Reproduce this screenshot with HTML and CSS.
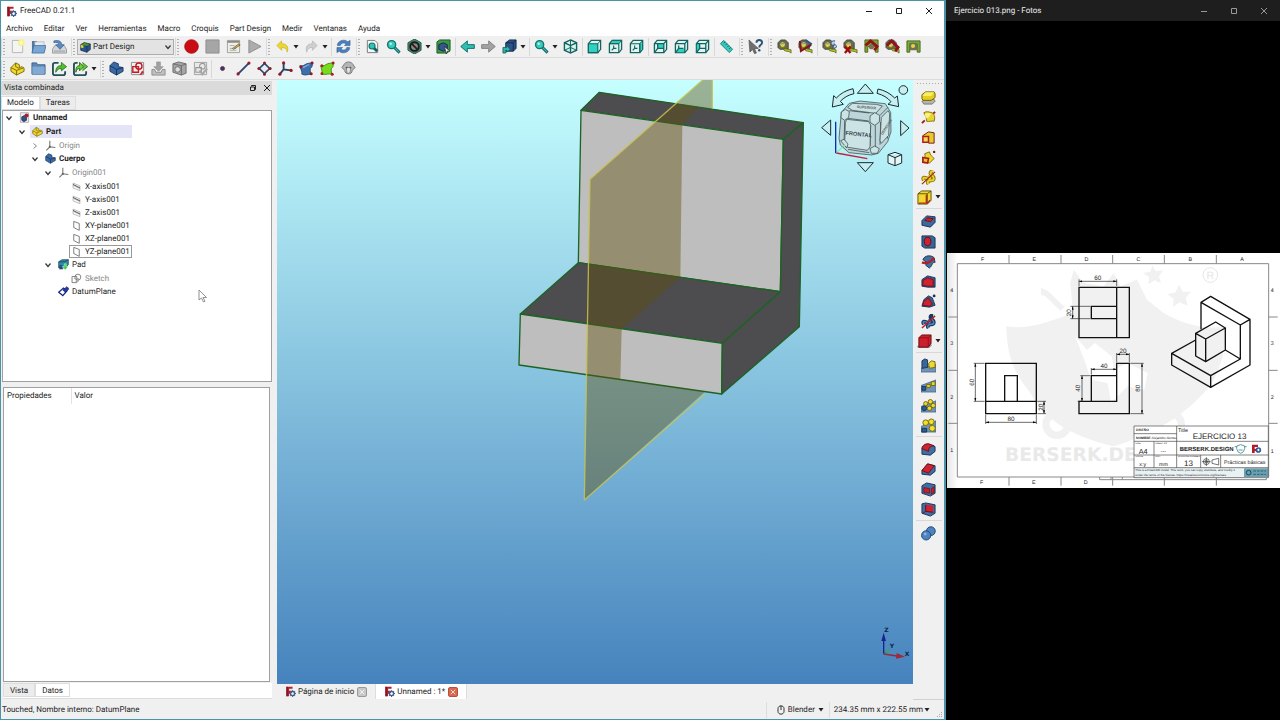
FILE: index.html
```html
<!DOCTYPE html>
<html lang="es">
<head>
<meta charset="utf-8">
<title>FreeCAD 0.21.1</title>
<link rel="stylesheet" href="styles.css">
</head>
<body>
<svg class="sprite" aria-hidden="true">
  <symbol id="logo" viewBox="0 0 16 16"><path d="M2 1h9v3H6v3h4v3H6v5H2z" fill="#b3202c"/><path d="M2 1h2v14H2z" fill="#7c1420"/><circle cx="11" cy="11" r="3" fill="none" stroke="#41618f" stroke-width="2"/><path d="M11 6v2M11 14v2M6 11h2M14 11h2M7.500 7.500l1 1M13.500 13.500l1 1M14.500 7.500l-1 1M8.500 13.500l-1 1" stroke="#41618f" stroke-width="1.600"/></symbol>
  <symbol id="new" viewBox="0 0 16 16"><path d="M2.500 1.500h11v13h-11z" fill="#f4f4f2" stroke="#b5b5b2"/><circle cx="12" cy="4" r="3.500" fill="#f7f38a"/><circle cx="12" cy="4" r="1.800" fill="#fffbb8"/></symbol>
  <symbol id="open" viewBox="0 0 16 16"><path d="M1 2h5l1 2h6v10H1z" fill="#55789f"/><path d="M4 3h10v7H4z" fill="#e8eaec" stroke="#9aa5b0" stroke-width=".6"/><path d="M3 7h13l-2 8H1z" fill="#79a6d6" stroke="#3f6996" stroke-width=".8"/></symbol>
  <symbol id="save" viewBox="0 0 16 16"><path d="M3 7h10l2.500 4v4H.5v-4z" fill="#d3d5d6" stroke="#84888c" stroke-width=".8"/><path d="M2 12h12v2H2z" fill="#b3b6b9"/><path d="M2 2c5-1 8 0 8.500 4H13l-4.500 5L4 6h3C7 4 5 3 2 4z" fill="#5a8bc0" stroke="#36608e" stroke-width=".7"/></symbol>
  <symbol id="rec" viewBox="0 0 16 16"><circle cx="8" cy="8" r="7.300" fill="#cb0c12" stroke="#a20a10" stroke-width=".8"/></symbol>
  <symbol id="stop" viewBox="0 0 16 16"><path d="M1 1h14v14H1z" fill="#a6a6a6" stroke="#8e8e8e"/></symbol>
  <symbol id="macro" viewBox="0 0 16 16"><path d="M1.500 1.500h13v13h-13z" fill="#eeeeea" stroke="#a0a09a"/><path d="M1.500 2h13v2h-13z" fill="#8b8b84"/><path d="M4 7h5M4 10h7M4 12h7" stroke="#aaa" /><path d="M7 10l7-5 1 1.500-7 4.500z" fill="#dfb94a" stroke="#60532f" stroke-width=".8"/></symbol>
  <symbol id="play" viewBox="0 0 16 16"><path d="M2 1l13 7-13 7z" fill="#acacac" stroke="#8f8f8f"/></symbol>
  <symbol id="undo" viewBox="0 0 16 16"><path d="M2 7l5-5v3c5 0 8 3 6 9 0-3-2-5-6-5v3z" fill="#edd633" stroke="#cbb320" stroke-width=".8"/></symbol>
  <symbol id="redo" viewBox="0 0 16 16"><path d="M14 7L9 2v3c-5 0-8 3-6 9 0-3 2-5 6-5v3z" fill="#cfcfcf" stroke="#b6b6b6" stroke-width=".8"/></symbol>
  <symbol id="refresh" viewBox="0 0 16 16"><path d="M1.500 7V5.500C3 1 10 0 12.500 3L15 1.500V7H9l1.700-1.700C8.500 3.500 5.500 4 4.500 7zM14.500 9v1.500C13 15 6 16 3.500 13L1 14.500V9h6l-1.700 1.700c2.200 1.800 5.200 1.300 6.200-1.700z" fill="#4b80bd" stroke="#315f95" stroke-width=".6"/></symbol>
  <symbol id="fitall" viewBox="0 0 16 16"><path d="M2.500 1.500h8l3 3v10h-11z" fill="#f6f6f6" stroke="#777"/><path d="M9 9l4 4" stroke="#0f6260" stroke-width="3"/><circle cx="7.500" cy="7.500" r="3.200" fill="#34c4b6" stroke="#0f7672" stroke-width="1.200"/></symbol>
  <symbol id="lens" viewBox="0 0 16 16"><path d="M8.500 8.500l6 6" stroke="#0f6260" stroke-width="3.200"/><path d="M9 9l5 5" stroke="#39bdb0" stroke-width="1.200"/><circle cx="6" cy="6" r="4.300" fill="#3bcbbd" stroke="#0f7672" stroke-width="1.500"/><circle cx="5" cy="5" r="1.300" fill="#b5f5ee"/></symbol>
  <symbol id="style" viewBox="0 0 16 16"><path d="M8 0l7 4v8l-7 4-7-4V4z" fill="#3f8a71" stroke="#1e5a48"/><circle cx="8" cy="8" r="4.600" fill="#7b9289" stroke="#241518" stroke-width="2"/><path d="M5 5l6 6" stroke="#40151a" stroke-width="2"/></symbol>
  <symbol id="bbox" viewBox="0 0 16 16"><path d="M1 3l3-2h11v11l-3 3H1z" fill="#3a9b45" stroke="#1c5524"/><path d="M3 6l5-2 4 2v5l-4 2-5-2z" fill="#35578c" stroke="#132a4a"/><path d="M9 8l6 5-3 0-1 3z" fill="#eee" stroke="#222" stroke-width=".7"/></symbol>
  <symbol id="left" viewBox="0 0 16 16"><path d="M.8 8l7-6v4h7.500v4H7.800v4z" fill="#2cc0b1" stroke="#116b66"/></symbol>
  <symbol id="right" viewBox="0 0 16 16"><path d="M15.200 8l-7-6v4H.7v4h7.500v4z" fill="#a3a3a3" stroke="#808080"/></symbol>
  <symbol id="linked" viewBox="0 0 16 16"><path d="M4 4l4-3h7v9l-3 3H4z" fill="#2d5288" stroke="#12294a"/><path d="M4 4h8v9M12 4l3-3" fill="none" stroke="#12294a"/><path d="M1 15V9h4V7l4 4-4 3v-2H4v3z" fill="#2fb5ab" stroke="#0e5c57" stroke-width=".8"/></symbol>
  <symbol id="wb" viewBox="0 0 16 16"><path d="M1 4l5-3 9 2v8l-5 4-9-3z" fill="#2d5288" stroke="#12294a"/><path d="M1 4l5-3 9 2-5 3z" fill="#4f9a35" stroke="#12294a" stroke-width=".6"/><path d="M1 4l4 1v4L1 8z" fill="#e3cf38"/><path d="M10 6v9" stroke="#12294a"/></symbol>
  <symbol id="iso" viewBox="0 0 16 16"><path d="M8 1l6.500 3v8L8 15l-6.500-3V4zM1.500 4L8 7l6.500-3M8 7v8" fill="#d7f5f0" stroke="#14655f" stroke-width="1.500"/><path d="M8 1v6M1.500 12L8 9l6.500 3" fill="none" stroke="#14655f"/></symbol>
  <symbol id="vfront" viewBox="0 0 16 16"><path d="M1.500 5l3-3.500h10v9.500l-3 3.500h-10z" fill="#d9f6f2" stroke="#14655f" stroke-width="1.400"/><path d="M1.500 5h10v9.500h-10z" fill="#2fd2c2" stroke="#14655f" stroke-width="1.200"/><path d="M11.500 5l3-3.500" stroke="#14655f"/></symbol>
  <symbol id="vtop" viewBox="0 0 16 16"><path d="M1.500 5l3-3.500h10v9.500l-3 3.500h-10z" fill="#e2f4f1" stroke="#14655f" stroke-width="1.400"/><path d="M1.500 5l3-3.500h10L11.500 5z" fill="#2fd2c2" stroke="#14655f"/><path d="M1.500 5h10v9.500M6 7v3h3M6 10l-2 2" fill="none" stroke="#14655f" stroke-width="1.200"/></symbol>
  <symbol id="vright" viewBox="0 0 16 16"><path d="M1.500 5l3-3.500h10v9.500l-3 3.500h-10z" fill="#e2f4f1" stroke="#14655f" stroke-width="1.400"/><path d="M11.500 5l3-3.500v9.500l-3 3.500z" fill="#2fd2c2" stroke="#14655f"/><path d="M1.500 5h10v9.500M6 7v3h3M6 10l-2 2" fill="none" stroke="#14655f" stroke-width="1.200"/></symbol>
  <symbol id="vrear" viewBox="0 0 16 16"><path d="M1.500 5l3-3.500h10v9.500l-3 3.500h-10z" fill="#e2f4f1" stroke="#14655f" stroke-width="1.400"/><path d="M5 5h6v5H5z" fill="#2fd2c2"/><path d="M1.500 5h10v9.500M11.500 5l3-3.500M5 5v5h6M5 10l-3 4" fill="none" stroke="#14655f" stroke-width="1.400"/></symbol>
  <symbol id="vbottom" viewBox="0 0 16 16"><path d="M1.500 5l3-3.500h10v9.500l-3 3.500h-10z" fill="#e2f4f1" stroke="#14655f" stroke-width="1.400"/><path d="M2 14l3-4h6v4z" fill="#2fd2c2"/><path d="M1.500 5h10v9.500M11.500 5l3-3.500M5 7v3h5M5 10l-3 4" fill="none" stroke="#14655f" stroke-width="1.400"/></symbol>
  <symbol id="vleft" viewBox="0 0 16 16"><path d="M1.500 5l3-3.500h10v9.500l-3 3.500h-10z" fill="#e2f4f1" stroke="#14655f" stroke-width="1.400"/><path d="M2 5h3v5l-3 4z" fill="#2fd2c2"/><path d="M1.500 5h10v9.500M11.500 5l3-3.500M5 5v5h6M5 10l-3 4" fill="none" stroke="#14655f" stroke-width="1.400"/></symbol>
  <symbol id="ruler" viewBox="0 0 16 16"><path d="M5 1.500L14.500 11 11 14.500 1.500 5z" fill="#3acabc" stroke="#14837b"/><path d="M6.500 3L5 4.500M8.500 5L7 6.500M10.500 7L9 8.500M12.500 9L11 10.500" stroke="#0d5b56"/></symbol>
  <symbol id="what" viewBox="0 0 16 16"><path d="M1 1l10 9-4 .3 2 4.500-2 .9-2.200-4.500L2 14z" fill="#6e6e6e" stroke="#444" stroke-width=".6"/><path d="M9 4c0-4 6-4 6 0 0 2.500-3 2-3 5" fill="none" stroke="#2e5175" stroke-width="2"/><circle cx="12" cy="12" r="1.300" fill="#2e5175"/></symbol>
  <symbol id="tape" viewBox="0 0 16 16"><path d="M1 4l3-3h5l3 3v7H3L1 9z" fill="#6b6a54" stroke="#35352a" stroke-width=".8"/><circle cx="6" cy="6" r="3" fill="#e5d63a" stroke="#4c491b" stroke-width=".7"/><path d="M4 5h4" stroke="#6fa6d2" stroke-width="1.500"/><path d="M7 10l8 1.500v3.500l-2-1.500-5-1z" fill="#b5c72a" stroke="#596313" stroke-width=".8"/></symbol>
  <symbol id="m-ang" viewBox="0 0 16 16"><use href="#tape"/><path d="M8 1l6 4-3 5" fill="none" stroke="#34578a" stroke-width="2"/><path d="M14 6L3 13 2 2" fill="none" stroke="#8a1218" stroke-width="2"/></symbol>
  <symbol id="m-ref" viewBox="0 0 16 16"><use href="#tape"/><path d="M14 2c-5-1-6 5-1 5V5l3 3-3 2.500V9" fill="#bcd0ea" stroke="#2e5288" stroke-width="1"/></symbol>
  <symbol id="m-clear" viewBox="0 0 16 16"><use href="#tape"/><path d="M2 8l6 7M8 8l-6 7" stroke="#a4080e" stroke-width="2.400"/></symbol>
  <symbol id="m-all" viewBox="0 0 16 16"><path d="M1 1h14v13h-3V8H4v6H1z" fill="#86a334" stroke="#4d6118"/><circle cx="8" cy="8" r="3" fill="#75744f"/><path d="M1.500 7L7 2l7 6-3 4" fill="none" stroke="#931219" stroke-width="3"/></symbol>
  <symbol id="m-3d" viewBox="0 0 16 16"><use href="#tape"/><path d="M2 7l5-5 7 7-3 4" fill="none" stroke="#931219" stroke-width="3"/></symbol>
  <symbol id="m-delta" viewBox="0 0 16 16"><path d="M1 14V2h14v12h-3V5H4v9z" fill="#7ba83a" stroke="#456618"/><path d="M4 6l2-2h4l2 2v6H4z" fill="#707056"/><circle cx="7.500" cy="7.500" r="2.200" fill="#e1d544"/></symbol>
  <symbol id="part" viewBox="0 0 16 16"><path d="M1 7l5-5 4 2v3l3-1 2 2v3l-8 4-6-4z" fill="#f0d928" stroke="#6b5c0b" stroke-width=".9"/><path d="M1 7l6 3 0 5M7 10l8-3M6 2v4l4 2" fill="none" stroke="#7d6b0e"/></symbol>
  <symbol id="folder" viewBox="0 0 16 16"><path d="M1 2h5l1 2h8v10H1z" fill="#5e88b7" stroke="#3d6289"/><path d="M1.500 6h13v8h-13z" fill="#80a9d3"/></symbol>
  <symbol id="link" viewBox="0 0 16 16"><path d="M7 2H3a2 2 0 00-2 2v9a2 2 0 002 2h9a2 2 0 002-2v-2" fill="none" stroke="#24515a" stroke-width="2"/><path d="M4 12c0-5 2-7 6-7V1.500L15.500 6 10 10.500V8c-3 0-4 1-6 4z" fill="#4fc02e" stroke="#1f6419" stroke-width=".8"/></symbol>
  <symbol id="links" viewBox="0 0 16 16"><path d="M5 2H3a2 2 0 00-2 2v9a2 2 0 002 2h9a2 2 0 002-2v-2" fill="none" stroke="#24515a" stroke-width="2"/><path d="M3 12c0-5 1-7 4-7V1.500L11.500 6 7 10.500V8c-2 0-3 1-4 4zM10 1.500L15.500 6 10 10.500" fill="#6ccb3c" stroke="#1f6419" stroke-width=".9"/></symbol>
  <symbol id="body" viewBox="0 0 16 16"><path d="M1 5l4-4 5 2v3l5 1v4l-7 4-7-4z" fill="#3a69a3" stroke="#14335b" stroke-width=".9"/><path d="M1 5l7 4v6M8 9l7-2" fill="none" stroke="#14335b"/></symbol>
  <symbol id="sketch" viewBox="0 0 16 16"><path d="M1.500 1.500h13v13h-13z" fill="#f7efef" stroke="#8b8b8b"/><path d="M3 6h6v6H3z" fill="none" stroke="#c31a24" stroke-width="1.500"/><circle cx="9.500" cy="5.500" r="3.300" fill="none" stroke="#c31a24" stroke-width="1.500"/><path d="M13 10l2 2-3 3-2 0z" fill="#c7323a"/></symbol>
  <symbol id="g-import" viewBox="0 0 16 16"><path d="M1 9h3l1 3h6l1-3h3v6H1z" fill="#c1c1c1" stroke="#8c8c8c"/><path d="M6 1h4v5h3l-5 5-5-5h3z" fill="#a2a2a2" stroke="#888" stroke-width=".6"/></symbol>
  <symbol id="g-shape" viewBox="0 0 16 16"><path d="M1 3l6-2 8 2v10l-5 2-9-3z" fill="#a6a6a6" stroke="#6c6c6c"/><path d="M10 5v10M1 3l9 2 5-2" fill="none" stroke="#6c6c6c"/><circle cx="6" cy="9" r="3" fill="#ddd" stroke="#6c6c6c"/></symbol>
  <symbol id="g-valid" viewBox="0 0 16 16"><path d="M1.500 1.500h13v13h-13z" fill="#e9e9e9" stroke="#a2a2a2"/><path d="M3 7h6v5H3z" fill="none" stroke="#999" stroke-width="1.200"/><circle cx="10" cy="5.500" r="3" fill="none" stroke="#999" stroke-width="1.200"/><path d="M7 10l3 4 5-6" fill="none" stroke="#aaa" stroke-width="2.400"/></symbol>
  <symbol id="point" viewBox="0 0 16 16"><circle cx="8" cy="8" r="2.200" fill="#2b3d6e" stroke="#7a2440" stroke-width=".8"/></symbol>
  <symbol id="line" viewBox="0 0 16 16"><path d="M2 14L14 2" stroke="#2a4a72" stroke-width="2"/><g fill="#941c27"><circle cx="2.200" cy="13.800" r="1.700"/><circle cx="13.800" cy="2.200" r="1.700"/></g></symbol>
  <symbol id="plane" viewBox="0 0 16 16"><path d="M8 2.500L13.500 8 8 13.500 2.500 8z" fill="#e8edf2" stroke="#2d4a69" stroke-width="1.800"/><g fill="#8c1c26"><circle cx="8" cy="2" r="1.600"/><circle cx="14" cy="8" r="1.600"/><circle cx="8" cy="14" r="1.600"/><circle cx="2" cy="8" r="1.600"/></g></symbol>
  <symbol id="lcs" viewBox="0 0 16 16"><path d="M6 2v7l8 1M6 9l-4 5" fill="none" stroke="#2d4260" stroke-width="2"/><g fill="#8c1c26"><circle cx="6" cy="2" r="1.700"/><circle cx="14" cy="10" r="1.700"/><circle cx="2" cy="14" r="1.700"/></g></symbol>
  <symbol id="binder" viewBox="0 0 16 16"><path d="M1 5c3 1 5-1 7-2s4 0 6-2c0 3 1 5-2 7 0 3 0 5 1 6-4 0-6 2-10 0 1-3-2-6-2-9z" fill="#3e6fab" stroke="#2a4f7f"/><path d="M4 7c2 0 4-3 7-3" fill="none" stroke="#7ea6d6" stroke-width="1.500"/><g fill="#8e1824"><circle cx="2" cy="6" r="1.600"/><circle cx="14" cy="2" r="1.600"/><circle cx="13" cy="13.500" r="1.600"/></g></symbol>
  <symbol id="subbinder" viewBox="0 0 16 16"><path d="M1 5c3 1 5-1 7-2s4 0 6-2c0 3 1 5-2 7 0 3 0 5 1 6-4-1-6 1-11 0 1-3-1-6-1-9z" fill="#77dc1c" stroke="#3f8d12"/><g fill="#a3201c"><circle cx="2" cy="5" r="1.600"/><circle cx="14" cy="2" r="1.600"/><circle cx="13" cy="14" r="1.600"/><circle cx="2" cy="13.500" r="1.500"/></g></symbol>
  <symbol id="clone" viewBox="0 0 16 16"><path d="M3 4c2-4 8-4 10 0l2 3-3 3c0 5-8 5-8 0L1 7z" fill="#b5b5b5" stroke="#7a7a7a"/><path d="M5.500 7h5l-1 6h-3z" fill="#e6e6e6" stroke="#777" stroke-width=".8"/><circle cx="6" cy="7" r=".9" fill="#555"/><circle cx="10" cy="7" r=".9" fill="#555"/></symbol>
  <symbol id="pad" viewBox="0 0 16 16"><path d="M1 12l4-2h9l1 2-3 3H3z" fill="#b4b4ae" stroke="#77776c"/><path d="M1 5l4-3h9l1 2v4l-4 3H2L1 9z" fill="#e6cf1c" stroke="#6a5e0c"/><path d="M1.500 5.500L5 2.500h9l-3 4H3z" fill="#f7ee62"/></symbol>
  <symbol id="revol" viewBox="0 0 16 16"><path d="M1 14l3-3M12 5l3-3" stroke="#a41b1b" stroke-width="2"/><path d="M3 3c3-2 5-1 9 0 3 2 3 6 2 9-3-1-5 1-8 0 0-3-1-6-3-9z" fill="#e8d52c" stroke="#807213"/><path d="M4 4c3-1 5-1 7 0l-3 4-3 1z" fill="#f8f183"/></symbol>
  <symbol id="loft" viewBox="0 0 16 16"><path d="M2 6l6-4 6 1v11l-6 0z" fill="#e4cb2e" stroke="#7c1416"/><path d="M2 7h6v6H2z" fill="#f1dd47" stroke="#b01b1e" stroke-width="1.600"/></symbol>
  <symbol id="pipe" viewBox="0 0 16 16"><path d="M4 4l5-2c1 4 3 5 5 7l-5 5-7-4c2-1 3-3 2-6z" fill="#efd82b" stroke="#7a6a0d"/><path d="M2 8l6 1-1 5-5-1z" fill="#e9c825" stroke="#a91b1b" stroke-width="1.800"/><circle cx="14" cy="2" r="1.300" fill="#7c1414"/></symbol>
  <symbol id="helix" viewBox="0 0 16 16"><path d="M3 11c-2-4 1-3 4-2s4-1 1-3M8 15c-2-3 0-4 3-4s4-3 0-6c-2-2 0-4 2-4" fill="none" stroke="#8a7910" stroke-width="4"/><path d="M3 11c-2-4 1-3 4-2s4-1 1-3M8 15c-2-3 0-4 3-4s4-3 0-6c-2-2 0-4 2-4" fill="none" stroke="#ebd22d" stroke-width="2"/><path d="M1 15L15 2" stroke="#a31a1a" stroke-width="1.200"/></symbol>
  <symbol id="addcube" viewBox="0 0 16 16"><path d="M1 4l4-3h10v10l-4 4H1z" fill="#efd92f" stroke="#5f520a"/><path d="M1 4h10v11M11 4l4-3" fill="none" stroke="#5f520a"/><path d="M2 14h9l3-3M10 5v9" fill="none" stroke="#b52a18" stroke-width="1.500"/></symbol>
  <symbol id="pocket" viewBox="0 0 16 16"><path d="M1 7l5-5 9 1v6l-5 5-9-2z" fill="#3d6898" stroke="#17355b"/><path d="M4 7l3-3 6 1-3 3z" fill="#cf2231" stroke="#6a0e16"/></symbol>
  <symbol id="hole" viewBox="0 0 16 16"><path d="M1 2l11 0 3 2v11H4l-3-2z" fill="#386496" stroke="#17355b"/><ellipse cx="7" cy="8" rx="3.500" ry="4.500" fill="#cf2231" stroke="#5f0e18"/></symbol>
  <symbol id="groove" viewBox="0 0 16 16"><path d="M2 6c2-5 9-5 12-2l1 5c-3-1-3 4-6 6l-4-3 1-3z" fill="#436f9f" stroke="#17355b"/><path d="M1 9c5 2 9 0 13-5" fill="none" stroke="#b51f2c" stroke-width="2.500"/></symbol>
  <symbol id="subloft" viewBox="0 0 16 16"><path d="M1 6l6-4 8 2v10H7l-6-1z" fill="#35608f" stroke="#17355b"/><path d="M2 7l5-3 6 2v7H7l-5-1z" fill="#cf2231" stroke="#7a0e18"/></symbol>
  <symbol id="subpipe" viewBox="0 0 16 16"><path d="M3 6l5-4 4 2 3 8-6 2-8-1z" fill="#35608f" stroke="#17355b"/><path d="M3 8l5-4c1 3 3 4 4 7l-3 2-7-1z" fill="#cf2231" stroke="#7a0e18"/><circle cx="14" cy="2" r="1.500" fill="#17355b"/></symbol>
  <symbol id="subhelix" viewBox="0 0 16 16"><path d="M3 11c-2-4 1-3 4-2s4-1 1-3M8 15c-2-3 0-4 3-4s4-3 0-6c-2-2 0-4 2-4" fill="none" stroke="#183a63" stroke-width="4"/><path d="M3 11c-2-4 1-3 4-2s4-1 1-3M8 15c-2-3 0-4 3-4s4-3 0-6" fill="none" stroke="#5b87b8" stroke-width="1.500"/><path d="M1 15L15 2" stroke="#b51f2c" stroke-width="1.500"/></symbol>
  <symbol id="subcube" viewBox="0 0 16 16"><path d="M0 13l4-2h11l1 1-3 3H1z" fill="#8d99a6"/><path d="M2 4l3-3h10v9l-3 4H2z" fill="#cc1f2b" stroke="#6c0d14"/><path d="M2 4h10v10M12 4l3-3" fill="none" stroke="#8d1119"/></symbol>
  <symbol id="mirror" viewBox="0 0 16 16"><path d="M0 11l16-4v8H0z" fill="#6f93ba" stroke="#36587f" stroke-width=".7"/><path d="M1 3l3-2 3 1v8l-6 1z" fill="#3a6798" stroke="#17355b"/><path d="M8 6l3-3 4 1v6l-6 1z" fill="#eed931" stroke="#75670d"/></symbol>
  <symbol id="lpat" viewBox="0 0 16 16"><path d="M0 8l16-6v13H0z" fill="#6f93ba" stroke="#36587f" stroke-width=".7"/><path d="M1 9h4v4H1z" fill="#2e5c8c" stroke="#17355b"/><path d="M6 7h4v3H6zM11 4h4v4h-4z" fill="#eed931" stroke="#75670d"/></symbol>
  <symbol id="ppat" viewBox="0 0 16 16"><path d="M0 9l16-6v12H0z" fill="#6f93ba" stroke="#36587f" stroke-width=".7"/><circle cx="3.500" cy="11" r="2.500" fill="#2e5c8c" stroke="#17355b"/><g fill="#eed931" stroke="#75670d"><circle cx="5" cy="6" r="2.200"/><circle cx="10" cy="4" r="2.400"/><circle cx="13" cy="8" r="2.400"/><circle cx="9" cy="11" r="2.400"/></g></symbol>
  <symbol id="multi" viewBox="0 0 16 16"><path d="M0 9l16-6v12H0z" fill="#6f93ba" stroke="#36587f" stroke-width=".7"/><path d="M1 11h5v4H1z" fill="#2e5c8c" stroke="#17355b"/><g fill="#f3e02c" stroke="#75670d"><circle cx="5" cy="5" r="3"/><circle cx="11" cy="4" r="3"/><circle cx="12" cy="11" r="3.200"/></g></symbol>
  <symbol id="fillet" viewBox="0 0 16 16"><path d="M1 7c1-4 4-5 7-5l7 3v5l-5 4-9-1z" fill="#3f6ea2" stroke="#17355b"/><path d="M1 7c1-4 4-5 7-5l6 2c-4 0-6 2-6 6z" fill="#d0222f" stroke="#7a0e18"/></symbol>
  <symbol id="chamfer" viewBox="0 0 16 16"><path d="M1 9l6-7 8 2v6l-5 4-9-1z" fill="#3f6ea2" stroke="#17355b"/><path d="M1 9l6-7 7 2-6 8z" fill="#d0222f" stroke="#7a0e18"/></symbol>
  <symbol id="draft" viewBox="0 0 16 16"><path d="M1 4l5-3 9 2v9l-5 3-9-3z" fill="#3f6ea2" stroke="#17355b"/><path d="M3 6l6 1v5l-6-1zM11 7l3-2v6l-3 2z" fill="#c9202c" stroke="#6b0d14" stroke-width=".7"/></symbol>
  <symbol id="thick" viewBox="0 0 16 16"><path d="M1 2l4-1 10 2v9l-5 3-9-3z" fill="#3f6ea2" stroke="#17355b"/><path d="M5 3l8 1v7l-8-1z" fill="#d0222f"/><path d="M5 3v7l-3 2M5 10l8 1" fill="none" stroke="#6b0d14"/></symbol>
  <symbol id="bool" viewBox="0 0 16 16"><g fill="#4d83bf" stroke="#1f4778" stroke-width="1"><circle cx="10.500" cy="5.500" r="4.700"/><circle cx="5.500" cy="10" r="4.900"/></g><circle cx="4.500" cy="8.500" r="1.500" fill="#8ab4e0"/></symbol>
  <symbol id="doc" viewBox="0 0 16 16"><path d="M2 1h12v14H2z" fill="#f0f0f5" stroke="#999"/><path d="M4 7l4-2 3 2v5l-4 2-3-2z" fill="#2f5288" stroke="#172a4b"/><circle cx="11" cy="5" r="3" fill="#b01e28"/></symbol>
  <symbol id="axes" viewBox="0 0 16 16"><path d="M7 1v9l8 1M7 10l-5 5" fill="none" stroke="#777" stroke-width="1.600"/><circle cx="7" cy="10" r="1.600" fill="#666"/></symbol>
  <symbol id="taxis" viewBox="0 0 16 16"><path d="M3 3l10 4v7L3 10zM3 6l10 5" fill="#fbfbfb" stroke="#a2a2a2"/><path d="M3 5l10 5" stroke="#555" stroke-width="1.400"/></symbol>
  <symbol id="tplane" viewBox="0 0 16 16"><path d="M4 2l8 3v10l-8-4z" fill="#fff" stroke="#666" stroke-width="1.200"/></symbol>
  <symbol id="tpad" viewBox="0 0 16 16"><path d="M1 4l5-3h9v7l-4 5H1z" fill="#2d8ca0" stroke="#173a5b"/><path d="M1 4h9l5-3" fill="none" stroke="#173a5b"/><path d="M2 9h5v6H2z" fill="#274b80"/><path d="M9 7h3v4h3l-4.500 5L6 11h3z" fill="#3bd34d" stroke="#fff" stroke-width=".6"/></symbol>
  <symbol id="tsketch" viewBox="0 0 16 16"><path d="M1.500 5h7v9h-7z" fill="#fff" stroke="#777" stroke-width="1.300"/><circle cx="10" cy="6" r="4.300" fill="none" stroke="#777" stroke-width="1.300"/><path d="M4 8h7v4H6" fill="none" stroke="#999"/></symbol>
  <symbol id="tdatum" viewBox="0 0 16 16"><path d="M1 9l7-6 5 4-6 7z" fill="#fff" stroke="#1a2b8e" stroke-width="2"/><path d="M7 6l6-5 3 3-5 5z" fill="#243aa8" stroke="#141f66"/></symbol>
  <symbol id="chev" viewBox="0 0 8 8"><path d="M1.500 2.500L4 5.500l2.500-3" fill="none" stroke="#333" stroke-width="1.200"/></symbol>
  <symbol id="chevr" viewBox="0 0 8 8"><path d="M2.500 1.500L5.500 4l-3 2.500" fill="none" stroke="#888"/></symbol>
  <symbol id="drop" viewBox="0 0 6 4"><path d="M.5 0h5L3 3.500z" fill="#222"/></symbol>
  <symbol id="min" viewBox="0 0 8 8"><path d="M1 4.500h6" stroke="currentColor"/></symbol>
  <symbol id="max" viewBox="0 0 8 8"><path d="M1.500 1.500h5v5h-5z" fill="none" stroke="currentColor"/></symbol>
  <symbol id="close" viewBox="0 0 8 8"><path d="M1 1l6 6M7 1L1 7" stroke="currentColor"/></symbol>
  <symbol id="float" viewBox="0 0 8 8"><path d="M2.500 2.500v-1h4v4h-1M1.500 3h4v3.500h-4z" fill="none" stroke="#222"/></symbol>
</svg>

<main class="desktop">
  <section class="app" aria-label="FreeCAD">
    <header class="titlebar">
      <svg class="icon12"><use href="#logo"/></svg>
      <h1 class="title">FreeCAD 0.21.1</h1>
      <button class="winbtn" aria-label="Minimizar"><svg><use href="#min"/></svg></button>
      <button class="winbtn" aria-label="Maximizar"><svg><use href="#max"/></svg></button>
      <button class="winbtn" aria-label="Cerrar"><svg><use href="#close"/></svg></button>
    </header>
    <nav class="menubar">
      <button>Archivo</button><button>Editar</button><button>Ver</button><button>Herramientas</button><button>Macro</button><button>Croquis</button><button>Part Design</button><button>Medir</button><button>Ventanas</button><button>Ayuda</button>
    </nav>
    <div class="toolbar" role="toolbar" aria-label="Principal">
      <span class="grip grip-first"></span>
      <button class="tool" aria-label="Nuevo"><svg><use href="#new"/></svg></button>
      <button class="tool" aria-label="Abrir"><svg><use href="#open"/></svg></button>
      <button class="tool" aria-label="Guardar"><svg><use href="#save"/></svg></button>
      <span class="grip"></span>
      <label class="workbench"><svg class="wb-icon"><use href="#wb"/></svg>
        <select aria-label="Banco de trabajo"><option>Part Design</option></select>
        <svg class="wb-arrow"><use href="#chev"/></svg></label>
      <span class="grip"></span>
      <button class="tool" aria-label="Grabar macro"><svg><use href="#rec"/></svg></button>
      <button class="tool" aria-label="Detener macro"><svg><use href="#stop"/></svg></button>
      <button class="tool" aria-label="Macros"><svg><use href="#macro"/></svg></button>
      <button class="tool" aria-label="Ejecutar macro"><svg><use href="#play"/></svg></button>
      <span class="grip"></span>
      <button class="tool" aria-label="Deshacer"><svg><use href="#undo"/></svg></button>
      <button class="more" aria-label="Lista deshacer"><svg><use href="#drop"/></svg></button>
      <button class="tool" aria-label="Rehacer"><svg><use href="#redo"/></svg></button>
      <button class="more" aria-label="Lista rehacer"><svg><use href="#drop"/></svg></button>
      <span class="sep"></span>
      <button class="tool" aria-label="Actualizar"><svg><use href="#refresh"/></svg></button>
      <span class="grip grip-wide"></span>
      <button class="tool" aria-label="Ajustar todo"><svg><use href="#fitall"/></svg></button>
      <button class="tool" aria-label="Ajustar selección"><svg><use href="#lens"/></svg></button>
      <button class="tool" aria-label="Estilo de dibujo"><svg><use href="#style"/></svg></button>
      <button class="more" aria-label="Estilos"><svg><use href="#drop"/></svg></button>
      <button class="tool" aria-label="Caja delimitadora"><svg><use href="#bbox"/></svg></button>
      <span class="sep"></span>
      <button class="tool" aria-label="Atrás"><svg><use href="#left"/></svg></button>
      <button class="tool" aria-label="Adelante"><svg><use href="#right"/></svg></button>
      <button class="tool" aria-label="Ir al objeto vinculado"><svg><use href="#linked"/></svg></button>
      <button class="more" aria-label="Vínculos"><svg><use href="#drop"/></svg></button>
      <span class="sep"></span>
      <button class="tool" aria-label="Zoom"><svg><use href="#lens"/></svg></button>
      <button class="more" aria-label="Opciones de zoom"><svg><use href="#drop"/></svg></button>
      <button class="tool" aria-label="Isométrica"><svg><use href="#iso"/></svg></button>
      <span class="sep"></span>
      <button class="tool" aria-label="Frontal"><svg><use href="#vfront"/></svg></button>
      <button class="tool" aria-label="Superior"><svg><use href="#vtop"/></svg></button>
      <button class="tool" aria-label="Derecha"><svg><use href="#vright"/></svg></button>
      <span class="sep"></span>
      <button class="tool" aria-label="Posterior"><svg><use href="#vrear"/></svg></button>
      <button class="tool" aria-label="Inferior"><svg><use href="#vbottom"/></svg></button>
      <button class="tool" aria-label="Izquierda"><svg><use href="#vleft"/></svg></button>
      <span class="sep"></span>
      <button class="tool" aria-label="Medir distancia"><svg><use href="#ruler"/></svg></button>
      <span class="grip grip-wide"></span>
      <button class="tool" aria-label="¿Qué es esto?"><svg><use href="#what"/></svg></button>
      <span class="grip grip-wide"></span>
      <button class="tool" aria-label="Medir lineal"><svg><use href="#tape"/></svg></button>
      <button class="tool" aria-label="Medir angular"><svg><use href="#m-ang"/></svg></button>
      <span class="sep"></span>
      <button class="tool" aria-label="Actualizar medidas"><svg><use href="#m-ref"/></svg></button>
      <button class="tool" aria-label="Borrar medidas"><svg><use href="#m-clear"/></svg></button>
      <button class="tool" aria-label="Alternar medidas"><svg><use href="#m-all"/></svg></button>
      <button class="tool" aria-label="Alternar 3D"><svg><use href="#m-3d"/></svg></button>
      <button class="tool" aria-label="Alternar delta"><svg><use href="#m-delta"/></svg></button>
    </div>
    <div class="toolbar toolbar-model" role="toolbar" aria-label="Modelado">
      <span class="grip grip-first"></span>
      <button class="tool" aria-label="Crear pieza"><svg><use href="#part"/></svg></button>
      <button class="tool" aria-label="Crear grupo"><svg><use href="#folder"/></svg></button>
      <button class="tool" aria-label="Crear vínculo"><svg><use href="#link"/></svg></button>
      <button class="tool" aria-label="Crear vínculos"><svg><use href="#links"/></svg></button>
      <button class="more" aria-label="Opciones de vínculo"><svg><use href="#drop"/></svg></button>
      <span class="grip"></span>
      <button class="tool" aria-label="Crear cuerpo"><svg><use href="#body"/></svg></button>
      <button class="tool" aria-label="Crear croquis"><svg><use href="#sketch"/></svg></button>
      <button class="tool" aria-label="Editar croquis"><svg><use href="#g-import"/></svg></button>
      <button class="tool" aria-label="Asignar croquis"><svg><use href="#g-shape"/></svg></button>
      <button class="tool" aria-label="Validar croquis"><svg><use href="#g-valid"/></svg></button>
      <span class="sep sep-thin"></span>
      <button class="tool" aria-label="Punto"><svg><use href="#point"/></svg></button>
      <button class="tool" aria-label="Línea"><svg><use href="#line"/></svg></button>
      <button class="tool" aria-label="Plano"><svg><use href="#plane"/></svg></button>
      <button class="tool" aria-label="Sistema de coordenadas"><svg><use href="#lcs"/></svg></button>
      <button class="tool" aria-label="Referencia de forma"><svg><use href="#binder"/></svg></button>
      <button class="tool" aria-label="Subforma"><svg><use href="#subbinder"/></svg></button>
      <button class="tool" aria-label="Clonar"><svg><use href="#clone"/></svg></button>
    </div>

    <div class="workspace">
      <aside class="dock">
        <div class="dock-title"><h2>Vista combinada</h2>
          <button aria-label="Flotar"><svg><use href="#float"/></svg></button>
          <button aria-label="Cerrar panel"><svg><use href="#close"/></svg></button></div>
        <div class="tabs tabs-top"><button class="tab on">Modelo</button><button class="tab">Tareas</button></div>
        <div class="tree">
          <ul>
            <li><div class="row"><svg class="tw"><use href="#chev"/></svg><span class="node strong"><svg><use href="#doc"/></svg>Unnamed</span></div>
              <ul>
                <li><div class="row"><svg class="tw"><use href="#chev"/></svg><span class="node strong picked"><svg><use href="#part"/></svg>Part</span></div>
                  <ul>
                    <li><div class="row"><svg class="tw"><use href="#chevr"/></svg><span class="node dim"><svg><use href="#axes"/></svg>Origin</span></div></li>
                    <li><div class="row"><svg class="tw"><use href="#chev"/></svg><span class="node strong"><svg><use href="#body"/></svg>Cuerpo</span></div>
                      <ul>
                        <li><div class="row"><svg class="tw"><use href="#chev"/></svg><span class="node dim"><svg><use href="#axes"/></svg>Origin001</span></div>
                          <ul>
                            <li><div class="row"><i class="tw"></i><span class="node"><svg><use href="#taxis"/></svg>X-axis001</span></div></li>
                            <li><div class="row"><i class="tw"></i><span class="node"><svg><use href="#taxis"/></svg>Y-axis001</span></div></li>
                            <li><div class="row"><i class="tw"></i><span class="node"><svg><use href="#taxis"/></svg>Z-axis001</span></div></li>
                            <li><div class="row"><i class="tw"></i><span class="node"><svg><use href="#tplane"/></svg>XY-plane001</span></div></li>
                            <li><div class="row"><i class="tw"></i><span class="node"><svg><use href="#tplane"/></svg>XZ-plane001</span></div></li>
                            <li><div class="row"><i class="tw"></i><span class="node focus"><svg><use href="#tplane"/></svg>YZ-plane001</span></div></li>
                          </ul>
                        </li>
                        <li><div class="row"><svg class="tw"><use href="#chev"/></svg><span class="node"><svg><use href="#tpad"/></svg>Pad</span></div>
                          <ul>
                            <li><div class="row"><i class="tw"></i><span class="node dim"><svg><use href="#tsketch"/></svg>Sketch</span></div></li>
                          </ul>
                        </li>
                        <li><div class="row"><i class="tw"></i><span class="node"><svg><use href="#tdatum"/></svg>DatumPlane</span></div></li>
                      </ul>
                    </li>
                  </ul>
                </li>
              </ul>
            </li>
          </ul>
          <svg class="pointer" viewBox="0 0 10 14"><path d="M1 1v10l2.500-2 2 4 1.500-.8-2-3.700H8.500z" fill="#fff" stroke="#777" stroke-width=".8"/></svg>
        </div>
        <div class="props">
          <table><thead><tr><th>Propiedades</th><th>Valor</th></tr></thead></table>
        </div>
        <div class="tabs tabs-bottom"><button class="tab">Vista</button><button class="tab on">Datos</button></div>
      </aside>

      <div class="document">
        <div class="view3d">
          <svg class="model" viewBox="0 0 1908 1812" preserveAspectRatio="xMidYMin meet">
            <g transform="translate(699 0)" stroke-linejoin="round">
              <g stroke="#1b6423" stroke-width="4">
                <path d="M268 37L880 128 820 178 213 91z" fill="#4d4c4e"/>
                <path d="M213 91L820 178 811 635 205 548z" fill="#bebebe"/>
                <path d="M205 548L811 635 637 790 31 702z" fill="#4d4c4e"/>
                <path d="M31 702L637 790 635 942 27 855z" fill="#bebebe"/>
                <path d="M820 178L880 128 868 740 635 942 637 790 811 635z" fill="#4d4c4e"/>
              </g>
              <path d="M578 0H607V88L565 82 517 134 511 592 335 748 331 898 585 935 223 1260 240 298z" fill="#5e4e0b" fill-opacity=".43"/>
              <path d="M578 0L240 298 223 1260 585 942M607 0V86" fill="none" stroke="#c8c350" stroke-width="4" stroke-opacity=".85"/>
            </g>
          </svg>
          <svg class="navcube" viewBox="0 0 279 300" aria-label="Cubo de navegación">
            <g fill="#c5eff0" stroke="#1c2b30" stroke-width="3" stroke-linejoin="round">
              <path d="M136 12l24 28h-48zM5 143l27-23v46zM267 144l-25-22v45zM136 275l-24-27h48z"/>
              <circle cx="250" cy="30" r="13"/>
              <path d="M37 81l4-34 8 7c13-14 29-23 50-28l3 15c-18 4-31 12-41 23l9 9zM236 80l-4-32-8 6c-14-14-30-23-50-27l-3 13c18 5 32 13 42 25l-9 8z"/>
              <path d="M204 224l21-7 20 7v25l-20 8-21-8zM204 224l21 9 20-9M225 233v24" fill="#e4f6f6"/>
            </g>
            <g fill="#cbe3e5" stroke="#2a393d" stroke-width="2" stroke-linejoin="round">
              <path d="M64 97L88 70l32-7 76 8 16 26 1 58-10 30-28 35-20 5-68-7-26-23-4-20z" fill="#bcd5d8"/>
              <path d="M88 92l60 7M84 115l62 8M74 122l-2 68M152 136l-2 62M84 208l64 10M166 136v66M182 126l-2 68M180 106l24-24M206 98l-4 78"/>
              <path d="M97 70l72 3 18 5-20 22-70-9-14-9z"/>
              <path d="M80 118l66 7 6 10-2 66-8 10-58-9-10-10 2-64z"/>
              <path d="M184 112l20-20 5 8-3 66-22 24-4-8z"/>
              <path d="M64 96l12-8 12 7-2 17-12 9-11-8zM150 108l14-10 15 8-1 20-14 10-14-9zM150 206l14-8 14 8-6 14h-18zM62 182l10-4 12 14-4 12z"/>
            </g>
            <path d="M47 125v95" stroke="#172cab" stroke-width="4"/><path d="M49 219l93 17" stroke="#c51f39" stroke-width="4"/><path d="M50 217l25-22" stroke="#66ef7d" stroke-width="3"/>
            <text x="76" y="164" class="face" transform="rotate(6 76 164)">FRONTAL</text>
            <text x="110" y="84" class="face-small" transform="rotate(4 110 84)">SUPERIOR</text>
            <text x="188" y="166" class="face-small" transform="rotate(-58 188 166)">DERECHA</text>
          </svg>
          <svg class="axis" viewBox="321 9 108 183" aria-label="Ejes">
            <path d="M341 102V55" stroke="#1b2194" stroke-width="4"/><path d="M334 63l7-25 7 25z" fill="#1b2194"/>
            <path d="M341 102l40 6" stroke="#96283c" stroke-width="4"/><path d="M380 99l25 11-27 6z" fill="#a02a38"/>
            <path d="M341 102l8-8" stroke="#257a44" stroke-width="3"/><path d="M345 96l14-11-3 13z" fill="#38a65b"/>
            <text x="343" y="36">Z</text><text x="359" y="83">Y</text><text x="404" y="109">X</text>
          </svg>
        </div>
        <div class="doctabs">
          <div class="doctab"><button class="doclink"><svg><use href="#logo"/></svg>Página de inicio</button><button class="x" aria-label="Cerrar Página de inicio"><svg><use href="#close"/></svg></button></div>
          <div class="doctab on"><button class="doclink"><svg><use href="#logo"/></svg>Unnamed : 1*</button><button class="x" aria-label="Cerrar Unnamed"><svg><use href="#close"/></svg></button></div>
        </div>
      </div>

      <div class="sidebar" role="toolbar" aria-label="Operaciones">
        <span class="vgrip"></span>
        <button class="vtool" aria-label="Extruir"><svg><use href="#pad"/></svg></button>
        <button class="vtool" aria-label="Revolución"><svg><use href="#revol"/></svg></button>
        <button class="vtool" aria-label="Proyección aditiva"><svg><use href="#loft"/></svg></button>
        <button class="vtool" aria-label="Barrido aditivo"><svg><use href="#pipe"/></svg></button>
        <button class="vtool" aria-label="Hélice aditiva"><svg><use href="#helix"/></svg></button>
        <div class="vsplit"><button class="vtool" aria-label="Primitiva aditiva"><svg><use href="#addcube"/></svg></button><button class="more" aria-label="Primitivas aditivas"><svg><use href="#drop"/></svg></button></div>
        <span class="vsep"></span>
        <button class="vtool" aria-label="Vaciado"><svg><use href="#pocket"/></svg></button>
        <button class="vtool" aria-label="Agujero"><svg><use href="#hole"/></svg></button>
        <button class="vtool" aria-label="Ranura"><svg><use href="#groove"/></svg></button>
        <button class="vtool" aria-label="Proyección sustractiva"><svg><use href="#subloft"/></svg></button>
        <button class="vtool" aria-label="Barrido sustractivo"><svg><use href="#subpipe"/></svg></button>
        <button class="vtool" aria-label="Hélice sustractiva"><svg><use href="#subhelix"/></svg></button>
        <div class="vsplit"><button class="vtool" aria-label="Primitiva sustractiva"><svg><use href="#subcube"/></svg></button><button class="more" aria-label="Primitivas sustractivas"><svg><use href="#drop"/></svg></button></div>
        <span class="vsep"></span>
        <button class="vtool" aria-label="Simetría"><svg><use href="#mirror"/></svg></button>
        <button class="vtool" aria-label="Patrón lineal"><svg><use href="#lpat"/></svg></button>
        <button class="vtool" aria-label="Patrón polar"><svg><use href="#ppat"/></svg></button>
        <button class="vtool" aria-label="Multitransformación"><svg><use href="#multi"/></svg></button>
        <span class="vsep"></span>
        <button class="vtool" aria-label="Redondeo"><svg><use href="#fillet"/></svg></button>
        <button class="vtool" aria-label="Chaflán"><svg><use href="#chamfer"/></svg></button>
        <button class="vtool" aria-label="Desmoldeo"><svg><use href="#draft"/></svg></button>
        <button class="vtool" aria-label="Espesor"><svg><use href="#thick"/></svg></button>
        <span class="vsep"></span>
        <button class="vtool" aria-label="Booleana"><svg><use href="#bool"/></svg></button>
      </div>
    </div>
    <footer class="status">
      <span class="message">Touched, Nombre interno: DatumPlane</span>
      <button class="nav nav-style"><svg class="mouse" viewBox="0 0 8 10"><path d="M1 3.500C1 0 7 0 7 3.500v3C7 10 1 10 1 6.500zM4 1v4" fill="none" stroke="#333"/></svg>Blender<svg class="caret"><use href="#drop"/></svg></button>
      <button class="nav">234.35 mm x 222.55 mm<svg class="caret"><use href="#drop"/></svg></button>
      <svg class="sizer" viewBox="0 0 8 8"><path d="M6 1h1v1H6zM4 3h1v1H4zM6 3h1v1H6zM2 5h1v1H2zM4 5h1v1H4zM6 5h1v1H6z" fill="#aaa"/></svg>
    </footer>
  </section>

  <section class="photos" aria-label="Fotos">
    <header class="titlebar dark">
      <h2 class="title">Ejercicio 013.png - Fotos</h2>
      <button class="winbtn" aria-label="Minimizar"><svg><use href="#min"/></svg></button>
      <button class="winbtn" aria-label="Maximizar"><svg><use href="#max"/></svg></button>
      <button class="winbtn" aria-label="Cerrar"><svg><use href="#close"/></svg></button>
    </header>
    <div class="stage">
      <svg class="sheet" viewBox="0 0 999 705">
        <defs>
          <linearGradient id="edge"><stop offset="0" stop-color="#e4e4e4"/><stop offset="1" stop-color="#fff"/></linearGradient>
          <marker id="tip" viewBox="0 0 10 6" refX="10" refY="3" markerWidth="10" markerHeight="7" markerUnits="userSpaceOnUse" orient="auto-start-reverse"><path d="M0 0l10 3-10 3z"/></marker>
        </defs>
        <path d="M0 0h999v705H0z" fill="#fff"/><path d="M0 0h32v705H0z" fill="url(#edge)"/>
        <g fill="#f1f1f1">
          <path d="M178 220c60 10 120-10 200-40l-8-90 10-40 30 40 60 10 30-40 20 40 50-20 30 60 50 40c70 40 130 50 190 40-10 90-20 160-90 220-60 60-130 100-250 140-120-30-200-70-250-160-50-60-70-110-72-200z"/>
          <path d="M282 105l20 8 50 48-12 12-46-44-12-4zM616 38l10 16 22-2-12 18 6 20-20-8-18 12 2-22-18-12 22-4zM696 96l12 20 24 0-16 18 6 24-24-10-20 14 2-24-18-14 24-6z"/>
          <path fill-rule="evenodd" d="M330 470a44 44 0 100 88 44 44 0 100-88zm0 22a22 22 0 110 44 22 22 0 110-44zM670 470a44 44 0 100 88 44 44 0 100-88zm0 22a22 22 0 110 44 22 22 0 110-44z"/>
        </g>
        <path d="M384 250l36 40 24-20 50 40 8 40 40-20 60 30-10 50-50-10-50 50-10-60-50-10-20-60z" fill="#fff"/>
        <circle cx="790" cy="66" r="22" fill="none" stroke="#e6e6e6" stroke-width="3"/><text x="790" y="78" class="mark-r">R</text>
        <text x="174" y="623" class="watermark">BERSERK.DESIGN</text>
        <path d="M968 560h30v100h-30z" fill="#fff"/>

        <g fill="none" stroke="#888" stroke-width="3">
          <path d="M31 32h934v640H31zM186 6v26M342 6v26M497 6v26M652 6v26M808 6v26M186 672v26M342 672v26M497 672v26M652 672v26M808 672v26M4 192h27M4 352h27M4 511h27M965 192h27M965 352h27M965 511h27M458 672v8h500v-8M492 672v8M526 672v8"/>
        </g>
        <g class="zone">
          <text x="107" y="24">F</text><text x="262" y="24">E</text><text x="418" y="24">D</text><text x="574" y="24">C</text><text x="730" y="24">B</text><text x="885" y="24">A</text>
          <text x="104" y="692">F</text><text x="260" y="692">E</text><text x="416" y="692">D</text>
          <text x="14" y="117">4</text><text x="14" y="277">3</text><text x="14" y="437">2</text><text x="14" y="597">1</text>
          <text x="976" y="117">4</text><text x="976" y="277">3</text><text x="976" y="437">2</text><text x="976" y="600">1</text>
        </g>

        <g transform="translate(-6 -9)">
          <g fill="none" stroke="#111" stroke-width="4">
            <path d="M402 112h151v151H402zM515 112v151M515 169h-76v37h76"/>
            <path d="M122 340h152v151H122zM122 454h152M179 454v-77h38v77"/>
            <path d="M515 340h38v151H402v-37h113zM439 454v-77h76"/>
          </g>
          <g fill="none" stroke="#222" stroke-width="2">
            <path d="M402 108V88M515 108V88M436 169h-60M436 206h-60M119 340H86M119 454H86M122 494v28M274 494v28M277 454h26M277 491h26M515 337v-28M553 337v-28M439 374v-20M436 377h-30M398 454h14M556 340h40M556 491h40"/>
            <g marker-start="url(#tip)" marker-end="url(#tip)"><path d="M402 94h113"/><path d="M383 169v37"/><path d="M91 340v114"/><path d="M122 517h152"/><path d="M297 454v37"/><path d="M515 313h38"/><path d="M439 358h76"/><path d="M411 377v77"/><path d="M591 340v151"/></g>
          </g>
          <g class="dimension">
            <text x="458" y="90">60</text><text x="198" y="512">80</text><text x="534" y="309">20</text><text x="477" y="354">40</text>
            <text x="379" y="188" transform="rotate(-90 379 188)">20</text><text x="87" y="397" transform="rotate(-90 87 397)">60</text><text x="294" y="472" transform="rotate(-90 294 472)">20</text><text x="405" y="415" transform="rotate(-90 405 415)">40</text><text x="586" y="415" transform="rotate(-90 586 415)">80</text>
          </g>
        </g>

        <g transform="translate(549 -9)">
          <g fill="none" stroke="#111" stroke-width="4" stroke-linejoin="round">
            <path d="M213 238v-81l29-18 118 69v137l-118 67-117-67v-35l72-40M213 157l118 68 29-17M331 225v102l-45-27M331 327l-89 50v35M125 310l117 67"/>
            <path d="M197 250l60-34 29 18v66l-59 35-30-17zM197 250l30 17v68M227 267l59-33"/>
          </g>
          <path d="M12 528h403v155H12z" fill="#fff"/>
          <path d="M12 653h403v30H12z" fill="#e9f1f4"/><path d="M342 655h73v26h-73z" fill="#6ba0b0"/>
          <path d="M12 528h403v155H12zM140 528v125M12 551h128M12 574h403M12 615h403M12 653h403M72 574v79M212 615v38M272 615v38" fill="none" stroke="#444" stroke-width="2"/>
          <g class="block">
            <text x="144" y="545" class="s16">Title</text><text x="188" y="568" class="s24">EJERCICIO 13</text>
            <text x="18" y="544" class="s10 b">DISEÑO</text><text x="18" y="567" class="s10"><tspan class="b">NOMBRE</tspan> Alejandro Alonso</text>
            <text x="16" y="581" class="s7">SIZE</text><text x="26" y="611" class="s22">A4</text><text x="76" y="581" class="s7">SHEET 1/1</text><text x="92" y="608" class="s16">---</text>
            <text x="16" y="622" class="s7">SCALE</text><text x="28" y="647" class="s16">x:y</text><text x="76" y="622" class="s7">UNIT</text><text x="87" y="647" class="s16">mm</text>
            <text x="149" y="602" class="s18 b">BERSERK.DESIGN</text>
            <text x="144" y="622" class="s7">DRAWING NUMBER</text><text x="162" y="649" class="s24">13</text><text x="282" y="641" class="s16">Prácticas básicas</text>
            <text x="16" y="664" class="s9">This is a FreeCAD model. This work, you can copy, distribute, and modify it</text>
            <text x="16" y="677" class="s9">under the terms of the license. https://creativecommons.org/licenses</text>
          </g>
          <path d="M320 588q12-8 24 0v8q-2 12-12 14-10-2-12-14zM326 600h12M314 590h8M342 590h8" fill="none" stroke="#5b9d9f" stroke-width="3"/>
          <path d="M366 584h18v7h-10v6h8v6h-8v6h-8z" fill="#b51a28"/><circle cx="385" cy="600" r="6" fill="none" stroke="#315a99" stroke-width="5"/>
          <g fill="none" stroke="#333" stroke-width="2"><circle cx="229" cy="635" r="9"/><circle cx="229" cy="635" r="4"/><path d="M216 635h26M229 622v26M246 630l20-5v20l-20-5z" /></g>
          <circle cx="356" cy="668" r="7" fill="none" stroke="#174453" stroke-width="3"/><path d="M370 663h38M370 673h38" stroke="#2a6373" stroke-width="3" stroke-dasharray="8 3"/>
        </g>
      </svg>
    </div>
  </section>
</main>
</body>
</html>
```

FILE: styles.css
```css
* { box-sizing: border-box; }
body { margin: 0; background: #000; color: #1c1c1c; font: 8px/10px Roboto, "Liberation Sans", sans-serif; text-rendering: geometricPrecision; }
button { margin: 0; padding: 0; border: 0; background: none; color: inherit; font: inherit; text-rendering: inherit; }
h1, h2 { margin: 0; font: inherit; }
ul { margin: 0; padding: 0; list-style: none; }
svg { display: block; flex: none; }
.sprite { position: absolute; width: 0; height: 0; }

.desktop { display: grid; grid-template-columns: minmax(0, 1fr) 334px; min-height: 100vh; }
.app { display: flex; flex-direction: column; min-width: 0; background: #f0f0f0; border: solid #4b93a8; border-width: 1px 2px 1px 1px; }

.titlebar { display: flex; align-items: center; height: 20px; padding-left: 5px; background: #fff; }
.titlebar .title { flex: 1; padding-left: 3px; }
.icon12 { width: 11px; height: 11px; }
.winbtn { display: grid; place-items: center; width: 30px; height: 100%; }
.winbtn svg { width: 8px; height: 8px; }

.menubar { display: flex; gap: 11px; height: 15px; padding-left: 5px; background: #fff; }

.toolbar { display: flex; align-items: center; height: 22px; border-bottom: 1px solid #dcdcdc; }
.tool { display: grid; place-items: center; width: 21px; height: 21px; flex: none; }
.tool svg { width: 15px; height: 15px; }
.more { display: grid; place-items: center start; width: 8px; height: 20px; flex: none; }
.more svg { width: 6px; height: 4px; }
.grip { width: 6px; height: 18px; flex: none; margin-left: 1px; border-left: 1px solid #dadada; background: radial-gradient(circle, #b0b0b0 1px, transparent 1px) 0 0 / 4px 3px repeat-y; }
.grip-first { margin-left: 0; }
.grip-wide { margin-left: 2px; }
.sep { width: 1px; height: 18px; flex: none; margin: 0 1px; background: #d8d8d8; }
.sep-thin { margin: 0; }
.workbench { position: relative; display: block; width: 97px; height: 16px; flex: none; }
.workbench select { width: 100%; height: 100%; padding: 0 12px 0 15px; appearance: none; border: 1px solid #adadad; border-radius: 0; background: #e3e3e3; color: inherit; font: inherit; text-rendering: inherit; }
.wb-icon, .wb-arrow { position: absolute; pointer-events: none; }
.wb-icon { left: 3px; top: 3px; width: 11px; height: 11px; }
.wb-arrow { right: 2px; top: 4px; width: 8px; height: 8px; }

.workspace { display: grid; grid-template-columns: 276px minmax(0, 1fr) 31px; flex: 1; }
.dock { display: flex; flex-direction: column; padding: 1px 5px 1px 0; }
.dock-title { display: flex; align-items: center; gap: 6px; height: 14px; padding: 0 1px 0 3px; background: #dadada; }
.dock-title h2 { flex: 1; }
.dock-title button svg { width: 8px; height: 8px; }
.tabs { display: flex; }
.tab { padding: 1px 6px; border: 1px solid #ddd; background: #ececec; }
.tab.on { background: #fff; }
.tabs-top { height: 15px; padding-top: 1px; }
.tabs-top .tab { height: 14px; padding: 1px 5px; }
.tree { position: relative; flex: 272 1 0; margin-left: 1px; padding: 0 0 0 1px; border: 1px solid #a0a0a0; background: #fff; }
.tree ul ul { margin-top: 1px; padding-left: 13px; }
.row { display: flex; align-items: center; height: 13px; }
.tw { width: 8px; height: 8px; margin: 0 4px 0 1px; flex: none; }
.node { display: flex; align-items: center; gap: 3px; height: 13px; padding: 0 1px; border: 1px solid transparent; white-space: nowrap; }
.node svg { width: 11px; height: 11px; }
.strong { font-weight: 700; }
.dim { color: #888; }
.picked { width: 102px; background: #e4e4f7; }
.focus { border-color: #999; }
.pointer { position: absolute; left: 195px; top: 178px; width: 10px; height: 14px; }
.props { flex: 295 1 0; margin: 5px 2px 0; border: 1px solid #a0a0a0; background: #fff; }
.props table { width: 100%; border-collapse: collapse; table-layout: fixed; }
.props th { height: 16px; padding: 0 2px 0 3px; font-weight: 400; text-align: left; }
.props th:first-child { width: 67px; border-right: 1px solid #e2e2e2; }
.tabs-bottom { height: 16px; margin: 1px 0 0 2px; background: #fff; border-bottom: 1px solid #ddd; }
.tabs-bottom .tab { height: 14px; padding: 2px 6px 0; }

.document { display: flex; flex-direction: column; min-width: 0; }
.view3d { position: relative; flex: 1; background: linear-gradient(#c6ffff, #4683bd); }
.model { width: 100%; }
.navcube { position: absolute; top: 0; right: 0; width: 93px; height: 100px; }
.axis { position: absolute; right: 0; bottom: 0; width: 36px; height: 61px; font: 700 18px "DejaVu Sans", sans-serif; fill: #112048; }
.face { font: 700 17px "Liberation Sans", sans-serif; fill: #3a474a; }
.face-small { font: 700 11px "Liberation Sans", sans-serif; fill: #566366; }
.doctabs { display: flex; height: 16px; }
.doctab { display: flex; align-items: center; gap: 3px; height: 15px; padding: 0 8px; border-right: 1px solid #ddd; }
.doctab.on { background: #fff; }
.doclink { display: flex; align-items: center; gap: 2px; }
.doclink svg { width: 11px; height: 11px; }
.x { display: grid; place-items: center; width: 10px; height: 10px; border: 1px solid #999; border-radius: 2px; background: #c8c8c8; color: #fff; }
.x svg { width: 6px; height: 6px; }
.on .x { border-color: #b8503c; background: #d8674f; }

.sidebar { display: flex; flex-direction: column; align-items: center; border-bottom: 1px solid #d0d0d0; }
.vgrip { width: 26px; height: 2px; margin: 2px 0 3px; background: radial-gradient(circle, #aaa 1px, transparent 1px) 0 0 / 3px 3px repeat-x; }
.vtool { display: grid; place-items: center; width: 20px; height: 20px; flex: none; }
.vtool svg { width: 15px; height: 15px; }
.vsplit { display: flex; }
.vsep { width: 26px; height: 1px; margin: 1px 0 2px; background: #d8d8d8; }

.status { display: flex; align-items: center; height: 19px; padding-left: 1px; }
.message { flex: 1; }
.nav { display: flex; align-items: center; gap: 1px; height: 16px; padding: 0 4px; border-left: 1px solid #ddd; }
.nav-style { gap: 3px; padding: 0 5px 0 10px; }
.mouse { width: 8px; height: 10px; }
.caret { width: 6px; height: 4px; }
.sizer { align-self: end; width: 10px; height: 8px; }

.photos { display: flex; flex-direction: column; min-width: 0; background: #000; }
.dark { height: 21px; padding: 0 1px 0 5px; background: #1e1e1e; color: #eee; }
.dark .winbtn { color: #999; }
.stage { display: flex; flex: 1; align-items: center; padding-left: 1px; }
.sheet { width: 100%; }
.sheet text { font-family: "Liberation Sans", sans-serif; }
.sheet .watermark { font: 700 56px "DejaVu Sans", sans-serif; fill: #e9e9e9; }
.sheet .mark-r { font-size: 32px; text-anchor: middle; fill: #e6e6e6; }
.zone { font-size: 16px; text-anchor: middle; fill: #222; }
.dimension { font-size: 19px; text-anchor: middle; fill: #222; }
.block { fill: #222; }
.s7 { font-size: 7px; }
.s9 { font-size: 9px; }
.s10 { font-size: 10px; }
.s16 { font-size: 16px; }
.s18 { font-size: 18px; }
.s22 { font-size: 22px; }
.s24 { font-size: 24px; }
.b { font-weight: 700; }
```
